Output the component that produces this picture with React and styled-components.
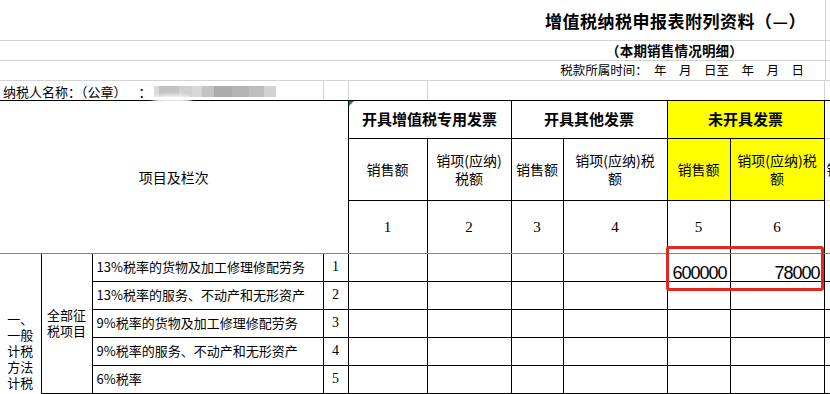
import styled, { createGlobalStyle } from "styled-components";

const GlobalStyle = createGlobalStyle`
  html, body { margin: 0; padding: 0; overflow: hidden; background: #fff; }
  body { font-family: "Noto Sans CJK SC", sans-serif; color: #000; }
`;

const GRID = "#d4d4d4";
const CJK = `"Noto Sans CJK SC", sans-serif`;

const Page = styled.div`
  position: relative;
  width: 830px;
  height: 394px;
  overflow: hidden;
`;

const TopRow = styled.div`
  display: flex;
  box-sizing: border-box;
  height: ${(p) => p.$h}px;
  border-bottom: 1px solid ${(p) => p.$line || GRID};
`;

const Banner = styled.div`
  flex: 0 0 826px;
  box-sizing: border-box;
  display: flex;
  align-items: center;
  justify-content: flex-end;
  padding-right: ${(p) => p.$pr}px;
  border-right: 1px solid ${GRID};
  font-family: ${CJK};
  font-size: ${(p) => p.$size}px;
  font-weight: ${(p) => (p.$bold ? 700 : 400)};
  letter-spacing: ${(p) => p.$ls || 0}px;
  white-space: pre;
  line-height: 1;
`;

const NameCell = styled.div`
  flex: 0 0 ${(p) => p.$w}px;
  box-sizing: border-box;
  display: flex;
  align-items: center;
  padding: 2px 0 0 ${(p) => p.$pl || 0}px;
  border-right: 1px solid ${GRID};
  font-family: ${CJK};
  font-size: 13px;
  line-height: 1;
  white-space: nowrap;
`;

const Colon = styled.span`
  margin-left: 12px;
`;

const Mosaic = styled.div`
  display: flex;
  height: 11px;
  margin-left: 2px;
`;

const Tile = styled.div`
  width: ${(p) => p.$w}px;
  background: ${(p) => p.$c};
`;

const Smudge = styled.div`
  position: absolute;
  left: 152px;
  top: 95px;
  width: 40px;
  height: 10px;
  border-radius: 50%;
  background: rgba(255, 255, 255, 0.92);
  filter: blur(2px);
`;

const Sheet = styled.table`
  border-collapse: collapse;
  table-layout: fixed;
  width: 860px;
  font-family: ${CJK};
`;

const Row = styled.tr`
  height: ${(p) => p.$h}px;
`;

const Cell = styled.td`
  padding: 0 ${(p) => p.$pr || 0}px 0 ${(p) => p.$pl || 0}px;
  font-family: ${(p) => p.$font || CJK};
  font-size: ${(p) => p.$size || 13}px;
  font-weight: ${(p) => (p.$bold ? 700 : 400)};
  letter-spacing: ${(p) => p.$ls || 0}px;
  line-height: ${(p) => p.$lh || 16}px;
  text-align: ${(p) => p.$align || "center"};
  vertical-align: ${(p) => p.$valign || "middle"};
  background: ${(p) => p.$fill || "transparent"};
  border: 1px solid ${(p) => p.$line || "#000"};
  border-top-style: ${(p) => (p.$noTop ? "none" : "solid")};
  border-left-style: ${(p) => (p.$noLeft ? "none" : "solid")};
  border-bottom-color: ${(p) => p.$bottom || p.$line || "#000"};
  white-space: nowrap;
  overflow: hidden;
`;

const Marker = styled.div`
  position: absolute;
  left: 349px;
  top: 101px;
  width: 0;
  height: 0;
  border-top: 5px solid #2a7d2a;
  border-right: 5px solid transparent;
`;

const Highlight = styled.div`
  position: absolute;
  left: 666px;
  top: 246px;
  width: 158px;
  height: 45px;
  box-sizing: border-box;
  border: 3px solid #e2291f;
  border-radius: 3px;
`;

const YELLOW = "#ffff00";
const GREEN = "#5a9e5a";
const NUM = `"Liberation Sans", sans-serif`;
const SERIF = `"Liberation Serif", serif`;
const cols = [41, 51, 231, 25, 79, 84, 52, 104, 63, 94, 36];

const tiles = [
  [5, "#dadada"], [20, "#c2c2c2"], [13, "#cfcfcf"], [10, "#d8d8d8"], [12, "#c4c4c4"],
  [18, "#ababab"], [17, "#b4b4b4"], [15, "#bebebe"], [12, "#d2d2d2"],
];

// rows 6 and 7 sit below the fold; they only give the first column its height
const body = [
  { label: "13%税率的货物及加工修理修配劳务", no: 1, sales: "600000", tax: "78000" },
  { label: "13%税率的服务、不动产和无形资产", no: 2 },
  { label: "9%税率的货物及加工修理修配劳务", no: 3 },
  { label: "9%税率的服务、不动产和无形资产", no: 4 },
  { label: "6%税率", no: 5 },
  { label: "", no: "" },
  { label: "", no: "" },
];

export default function App() {
  return (
    <Page>
      <GlobalStyle />
      <TopRow $h={41}>
        <Banner $size={17} $bold $ls={0.5} $pr={19}>增值税纳税申报表附列资料（—）</Banner>
      </TopRow>
      <TopRow $h={20}>
        <Banner $size={13.5} $bold $ls={0.2} $pr={82}>（本期销售情况明细）</Banner>
      </TopRow>
      <TopRow $h={20}>
        <Banner $size={12.5} $pr={21}>税款所属时间：　年　月　日至　年　月　日</Banner>
      </TopRow>
      <TopRow $h={20} $line="#000">
        <NameCell $w={324} $pl={3}>
          纳税人名称：（公章）<Colon>：</Colon>
          <Mosaic>
            {tiles.map(([w, c], i) => (
              <Tile key={i} $w={w} $c={c} />
            ))}
          </Mosaic>
        </NameCell>
        <NameCell $w={25} />
        <NameCell $w={79} />
        <NameCell $w={397} />
      </TopRow>

      <Sheet>
        <colgroup>
          {cols.map((w, i) => (
            <col key={i} style={{ width: w }} />
          ))}
        </colgroup>
        <tbody>
          <Row $h={37}>
            <Cell colSpan={4} rowSpan={3} $noTop $noLeft $size={14} $bottom={GREEN}>
              项目及栏次
            </Cell>
            <Cell colSpan={2} $noTop $bold $size={15}>开具增值税专用发票</Cell>
            <Cell colSpan={2} $noTop $bold $size={15}>开具其他发票</Cell>
            <Cell colSpan={2} $noTop $bold $size={15} $fill={YELLOW}>未开具发票</Cell>
            <Cell $noTop $line={GRID} />
          </Row>
          <Row $h={62}>
            <Cell $size={14}>销售额</Cell>
            <Cell $size={14} $lh={18}>销项(应纳)<br />税额</Cell>
            <Cell $size={14}>销售额</Cell>
            <Cell $size={14} $lh={18}>销项(应纳)税<br />额</Cell>
            <Cell $size={14} $fill={YELLOW}>销售额</Cell>
            <Cell $size={14} $lh={18} $fill={YELLOW}>销项(应纳)税<br />额</Cell>
            <Cell $size={14} $align="left" $pl={2} $line={GRID}>销</Cell>
          </Row>
          <Row $h={53}>
            {[1, 2, 3, 4, 5, 6].map((n) => (
              <Cell key={n} $font={SERIF} $size={15} $bottom={GREEN}>
                {n}
              </Cell>
            ))}
            <Cell $line={GRID} $bottom={GREEN} />
          </Row>

          {body.map((r, i) => (
            <Row key={i} $h={28}>
              {i === 0 && (
                <Cell rowSpan={7} $noLeft $lh={16}>
                  一、<br />一般<br />计税<br />方法<br />计税
                </Cell>
              )}
              {i === 0 && (
                <Cell rowSpan={5} $lh={16}>
                  全部征<br />税项目
                </Cell>
              )}
              {i === 5 && <Cell rowSpan={2} />}
              <Cell $align="left" $pl={4}>{r.label}</Cell>
              <Cell $font={SERIF} $size={14}>{r.no}</Cell>
              <Cell />
              <Cell />
              <Cell />
              <Cell />
              <Cell $font={NUM} $size={18} $ls={-1} $align="right" $pr={3} $valign="bottom">
                {r.sales}
              </Cell>
              <Cell $font={NUM} $size={18} $ls={-1} $align="right" $pr={4} $valign="bottom">
                {r.tax}
              </Cell>
              <Cell />
            </Row>
          ))}
        </tbody>
      </Sheet>

      <Smudge />
      <Marker />
      <Highlight />
    </Page>
  );
}
